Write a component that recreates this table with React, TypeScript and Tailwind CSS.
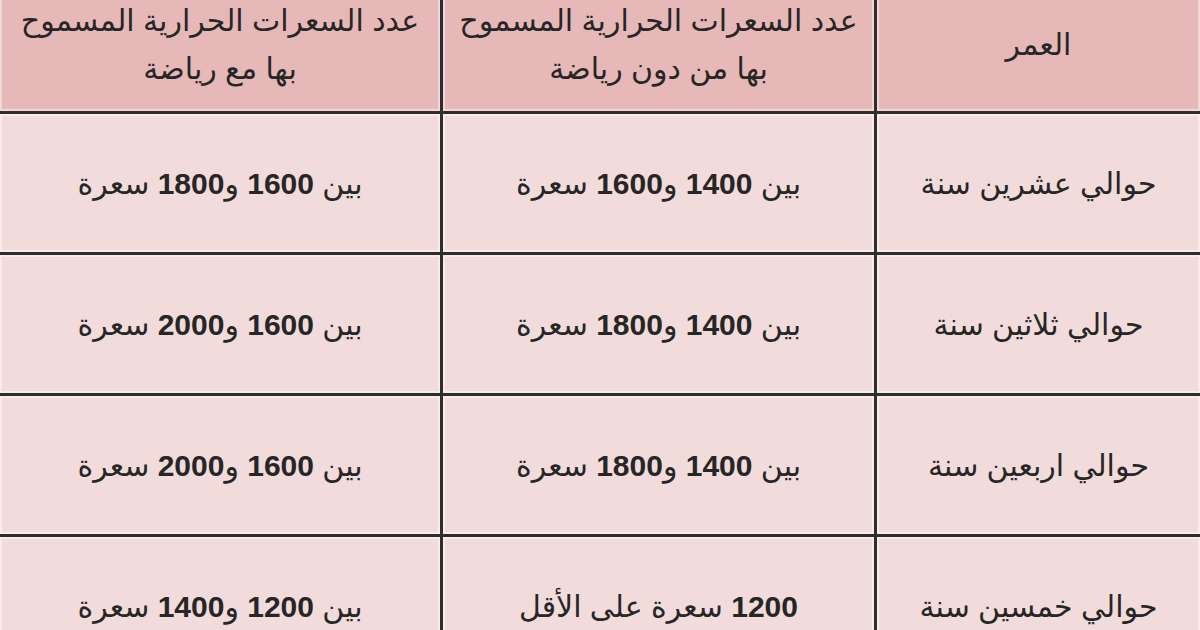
const rows = [
  {
    age: 'حوالي عشرين سنة',
    without: ['1400', '1600'],
    withSport: ['1600', '1800'],
  },
  {
    age: 'حوالي ثلاثين سنة',
    without: ['1400', '1800'],
    withSport: ['1600', '2000'],
  },
  {
    age: 'حوالي اربعين سنة',
    without: ['1400', '1800'],
    withSport: ['1600', '2000'],
  },
  {
    age: 'حوالي خمسين سنة',
    without: null,
    withSport: ['1200', '1400'],
  },
]

const cell =
  'flex items-center justify-center text-center shadow-[inset_0_0_0_2px_rgba(255,255,255,0.45)]'

function Range({ pair }: { pair: string[] }) {
  return (
    <span>
      بين <b className="font-bold">{pair[0]}</b> و<b className="font-bold">{pair[1]}</b> سعرة
    </span>
  )
}

export default function App() {
  return (
    <div className="h-[630px] w-[1200px] overflow-hidden bg-[#f2dcdb]">
      <div
        dir="rtl"
        className="mt-[-22px] grid grid-cols-[323px_431px_440px] grid-rows-[133px_138px_138px_138px_138px] gap-[3px] bg-[#2e2e2e] text-[30px] text-[#262626] [font-family:'Liberation_Sans','DejaVu_Sans',sans-serif]"
      >
        <div className={`${cell} bg-[#e6b9b8]`}>العمر</div>
        <div className={`${cell} bg-[#e6b9b8] leading-[48px]`}>
          <span>
            عدد السعرات الحرارية المسموح
            <br />
            بها من دون رياضة
          </span>
        </div>
        <div className={`${cell} bg-[#e6b9b8] leading-[48px]`}>
          <span>
            عدد السعرات الحرارية المسموح
            <br />
            بها مع رياضة
          </span>
        </div>

        {rows.map((r) => (
          <>
            <div key={r.age + 'a'} className={`${cell} bg-[#f2dcdb]`}>
              {r.age}
            </div>
            <div key={r.age + 'b'} className={`${cell} bg-[#f2dcdb]`}>
              {r.without ? (
                <Range pair={r.without} />
              ) : (
                <span>
                  <b className="font-bold">1200</b> سعرة على الأقل
                </span>
              )}
            </div>
            <div key={r.age + 'c'} className={`${cell} bg-[#f2dcdb]`}>
              <Range pair={r.withSport} />
            </div>
          </>
        ))}
      </div>
    </div>
  )
}
